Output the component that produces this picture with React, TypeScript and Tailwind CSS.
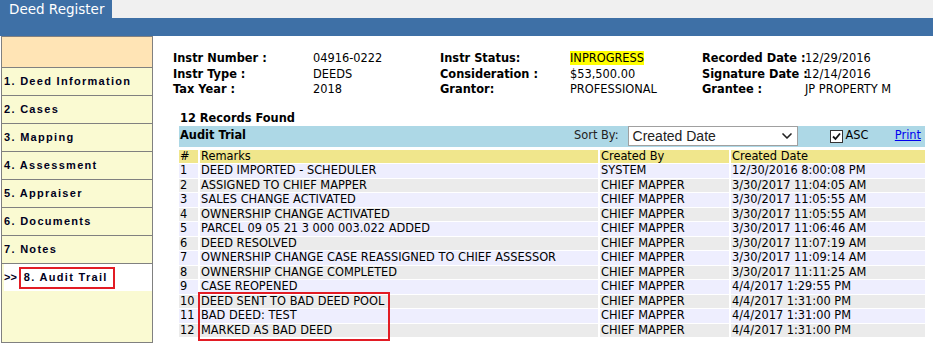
import { ChevronDown } from 'lucide-react';

const menu = [
  '1. Deed Information',
  '2. Cases',
  '3. Mapping',
  '4. Assessment',
  '5. Appraiser',
  '6. Documents',
  '7. Notes',
];

const rows = [
  ['DEED IMPORTED - SCHEDULER', 'SYSTEM', '12/30/2016 8:00:08 PM'],
  ['ASSIGNED TO CHIEF MAPPER', 'CHIEF MAPPER', '3/30/2017 11:04:05 AM'],
  ['SALES CHANGE ACTIVATED', 'CHIEF MAPPER', '3/30/2017 11:05:55 AM'],
  ['OWNERSHIP CHANGE ACTIVATED', 'CHIEF MAPPER', '3/30/2017 11:05:55 AM'],
  ['PARCEL 09 05 21 3 000 003.022 ADDED', 'CHIEF MAPPER', '3/30/2017 11:06:46 AM'],
  ['DEED RESOLVED', 'CHIEF MAPPER', '3/30/2017 11:07:19 AM'],
  ['OWNERSHIP CHANGE CASE REASSIGNED TO CHIEF ASSESSOR', 'CHIEF MAPPER', '3/30/2017 11:09:14 AM'],
  ['OWNERSHIP CHANGE COMPLETED', 'CHIEF MAPPER', '3/30/2017 11:11:25 AM'],
  ['CASE REOPENED', 'CHIEF MAPPER', '4/4/2017 1:29:55 PM'],
  ['DEED SENT TO BAD DEED POOL', 'CHIEF MAPPER', '4/4/2017 1:31:00 PM'],
  ['BAD DEED: TEST', 'CHIEF MAPPER', '4/4/2017 1:31:00 PM'],
  ['MARKED AS BAD DEED', 'CHIEF MAPPER', '4/4/2017 1:31:00 PM'],
];

const verdana = 'font-["DejaVu_Sans",Verdana,sans-serif]';

const InfoRow = ({ cells }: { cells: [string, string, string, string, string, string] }) => (
  <div className="grid grid-cols-[140px_127px_130px_132px_103px_1fr] h-[15.5px] items-center whitespace-nowrap">
    <span className="font-bold">{cells[0]}</span>
    <span>{cells[1]}</span>
    <span className="font-bold">{cells[2]}</span>
    <span>
      {cells[3] === 'INPROGRESS' ? <span className="bg-[#ffff00]">{cells[3]}</span> : cells[3]}
    </span>
    <span className="font-bold">{cells[4]}</span>
    <span>{cells[5]}</span>
  </div>
);

export default function App() {
  return (
    <div className={`w-[933px] h-[343px] overflow-hidden bg-white text-[11.4px] text-black ${verdana}`}>
      {/* tab strip */}
      <div className="flex h-[18px] bg-[#f0f0f0]">
        <div className="w-[112px] bg-[#3e70a6] text-white text-[13.5px] pl-[9px] leading-[19px]">Deed Register</div>
      </div>
      <div className="h-[18px] bg-[#3e70a6]" />

      <div className="flex">
        {/* side menu */}
        <div className="w-[152px] ml-[1px] h-[307px] border border-[#808080] bg-[#fafad2] font-['Liberation_Sans',Arial,sans-serif] text-[11px] font-bold tracking-[1.3px] text-[#000020]">
          <div className="h-[31px] bg-[#ffe4b5] border-b border-[#808080]" />
          {menu.map((m) => (
            <div key={m} className="h-[28px] border-b border-[#808080] pl-[2px] flex items-center">
              {m}
            </div>
          ))}
          <div className="h-[27px] bg-white ml-[2px] flex items-center">
            <span className="tracking-normal">&gt;&gt;</span>
            <span className="ml-[2px] border-2 border-[#e21c24] pl-[3px] pr-[5px] h-[22px] flex items-center">8. Audit Trail</span>
          </div>
        </div>

        {/* main */}
        <div className="flex-1 pt-[14px]">
          <div className="ml-[20px]">
            <InfoRow cells={['Instr Number :', '04916-0222', 'Instr Status:', 'INPROGRESS', 'Recorded Date :', '12/29/2016']} />
            <InfoRow cells={['Instr Type :', 'DEEDS', 'Consideration :', '$53,500.00', 'Signature Date :', '12/14/2016']} />
            <InfoRow cells={['Tax Year :', '2018', 'Grantor:', 'PROFESSIONAL', 'Grantee :', 'JP PROPERTY M']} />
          </div>

          <div className="relative ml-[26px] mt-[14px] w-[746px]">
            <div className="font-bold pl-[1px] h-[15px] leading-[15px]">12 Records Found</div>
            <div className="h-[21px] bg-[#add8e6] flex items-center">
              <span className="font-bold pl-[1px] w-[395px]">Audit Trial</span>
              <span className="text-[#222]">Sort By:</span>
              <div className="ml-[9px] w-[170px] h-[20px] bg-white border border-[#a0a0a0] flex items-center justify-between pl-[4px] pr-[2px] font-['Liberation_Sans',Arial,sans-serif] text-[14px] text-[#222]">
                <span>Created Date</span>
                <ChevronDown className="w-[16px] h-[16px]" strokeWidth={2.5} />
              </div>
              <div className="ml-[32px] w-[13px] h-[13px] border border-[#333] bg-white flex items-center justify-center">
                <svg width="11" height="11" viewBox="0 0 11 11">
                  <path d="M2 5.5 L4.5 8 L9 2.5" fill="none" stroke="#111" strokeWidth="1.8" />
                </svg>
              </div>
              <span className="ml-[3px]">ASC</span>
              <a className="ml-auto mr-[4px] text-[#0000ee] underline">Print</a>
            </div>
            <table className="border-separate border-spacing-x-[2px] border-spacing-y-[1px] -ml-[2px] mt-[2px] w-[750px] whitespace-nowrap">
              <thead>
                <tr className="bg-[#f0e68c] h-[13.5px] text-left">
                  <th className="font-normal w-[19px] px-[1px] leading-[13px]">#</th>
                  <th className="font-normal w-[398px] px-[1px] leading-[13px]">Remarks</th>
                  <th className="font-normal w-[129px] px-[1px] leading-[13px]">Created By</th>
                  <th className="font-normal px-[1px] leading-[13px]">Created Date</th>
                </tr>
              </thead>
              <tbody>
                {rows.map((r, i) => (
                  <tr key={i} className={`h-[13.5px] ${i % 2 === 0 ? 'bg-[#eeeefe]' : 'bg-[#ebebeb]'}`}>
                    <td className="px-[1px] leading-[13px]">{i + 1}</td>
                    <td className="px-[1px] leading-[13px]">{r[0]}</td>
                    <td className="px-[1px] leading-[13px]">{r[1]}</td>
                    <td className="px-[1px] leading-[13px]">{r[2]}</td>
                  </tr>
                ))}
              </tbody>
            </table>
            {/* highlight around the bad deed remarks */}
            <div className="absolute left-[19px] top-[181px] w-[192px] h-[49px] border-2 border-[#e21c24] pointer-events-none" />
          </div>
        </div>
      </div>
    </div>
  );
}
